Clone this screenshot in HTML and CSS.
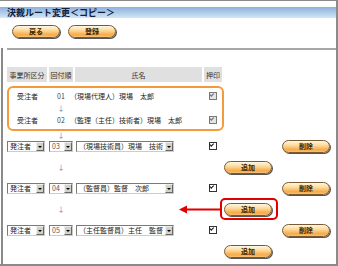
FILE: index.html
```
<!DOCTYPE html>
<html lang="ja">
<head>
    <meta charset="UTF-8">
    <title>決裁ルート変更</title>
    <link rel="stylesheet" href="styles.css">
</head>
<body>
<div class="frame">
    <div class="titlebar">決裁ルート変更＜コピー＞</div>
    <div class="toolbar">
        <span class="btn">戻る</span>
        <span class="btn">登録</span>
    </div>
    <div class="route">
        <div class="rule"></div>
        <div class="grid head">
            <div class="th">事業所区分</div>
            <div class="th">回付順</div>
            <div class="th">氏名</div>
            <div class="th">押印</div>
        </div>

        <!-- 固定ルート（編集不可） -->
        <div class="fixed">
            <div class="grid line">
                <div class="kind">受注者</div>
                <div class="no">01</div>
                <div class="name">（現場代理人）現場　太郎</div>
                <div><span class="chk off"></span></div>
            </div>
            <div class="grid step"><div></div><div class="arrow">↓</div></div>
            <div class="grid line">
                <div class="kind">受注者</div>
                <div class="no">02</div>
                <div class="name">（監理（主任）技術者）現場　太郎</div>
                <div><span class="chk off"></span></div>
            </div>
        </div>
        <div class="grid step"><div></div><div class="arrow">↓</div></div>

        <div class="grid line edit">
            <div class="sel s1"><span>発注者</span><i></i></div>
            <div class="sel s2"><span>03</span><i></i></div>
            <div class="sel s3"><span>（現場技術員）現場　技術</span><i></i></div>
            <div><span class="chk"></span></div>
            <div><span class="btn del">削除</span></div>
        </div>
        <div class="grid link">
            <div></div><div class="arrow">↓</div><div></div><div></div>
            <div><span class="btn">追加</span></div>
        </div>

        <div class="grid line edit">
            <div class="sel s1"><span>発注者</span><i></i></div>
            <div class="sel s2"><span>04</span><i></i></div>
            <div class="sel s3"><span>（監督員）監督　次郎</span><i></i></div>
            <div><span class="chk"></span></div>
            <div><span class="btn del">削除</span></div>
        </div>
        <div class="grid link">
            <div></div><div class="arrow">↓</div><div></div><div></div>
            <div><span class="mark"><span class="btn">追加</span></span></div>
            <svg class="pointer" width="42" height="9" viewBox="0 0 42 9">
                <line x1="6" y1="4.5" x2="41" y2="4.5" stroke="#e00000" stroke-width="2"/>
                <polygon points="0,4.5 8,0.5 8,8.5" fill="#e00000"/>
            </svg>
        </div>

        <div class="grid line edit">
            <div class="sel s1"><span>発注者</span><i></i></div>
            <div class="sel s2"><span>05</span><i></i></div>
            <div class="sel s3"><span>（主任監督員）主任　監督</span><i></i></div>
            <div><span class="chk"></span></div>
            <div><span class="btn del">削除</span></div>
        </div>
        <div class="grid link">
            <div></div><div></div><div></div><div></div>
            <div><span class="btn">追加</span></div>
        </div>
    </div>
</div>
</body>
</html>
```

FILE: styles.css
```
body {
    margin: 0;
    background-color: #fff;
    font-family: "Noto Sans CJK JP", "Noto Sans", sans-serif;
    color: #222;
}
.frame {
    width: 338px;
    height: 266px;
    box-sizing: border-box;
    border-top: 1px solid #8a8a8a;
    border-right: 2px solid #8a8a8a;
    border-bottom: 2px solid #8a8a8a;
    overflow: hidden;
}
.titlebar {
    margin-top: 6px;
    height: 11px;
    line-height: 11px;
    padding-left: 7px;
    background: linear-gradient(#8eb0dc, #b4d0ec 60%, #d4e8f6);
    font-size: 9px;
    font-weight: bold;
    color: #10203a;
}
.toolbar {
    display: flex;
    gap: 8px;
    padding-left: 12px;
    margin-top: 7px;
}
.btn {
    display: inline-flex;
    align-items: center;
    justify-content: center;
    width: 46px;
    height: 11px;
    border: 1px solid #7a5a30;
    border-radius: 7px;
    background: linear-gradient(#fff7e4, #fdd99a 40%, #f5aa48 80%, #f7c277);
    box-shadow: 1px 1px 0 #555;
    font-size: 7px;
    font-weight: bold;
    color: #3a2200;
    line-height: 1;
}
.route {
    margin-top: 10px;
    margin-left: 1px;
    border-left: 2px solid #8a8a8a;
    padding-left: 4px;
}
.rule {
    height: 2px;
    background-color: #a8a8a8;
    margin-bottom: 17px;
}
.grid {
    display: grid;
    grid-template-columns: 40px 24px 127px 18px 1fr;
    column-gap: 2px;
    align-items: center;
    font-size: 7px;
    position: relative;
}
.head {
    height: 15px;
    align-items: stretch;
}
.th {
    background-color: #e0e0e0;
    display: flex;
    align-items: center;
    justify-content: center;
    color: #333;
}
.fixed {
    width: 217px;
    box-sizing: border-box;
    margin-top: 4px;
    border: 2px solid #f39a3c;
    border-radius: 6px;
    padding-bottom: 1px;
}
.fixed .grid {
    grid-template-columns: 38px 24px 127px 18px;
}
.line {
    height: 16px;
}
.step {
    height: 8px;
}
.kind {
    padding-left: 8px;
}
.no {
    text-align: center;
    color: #444;
}
.name {
    margin-left: -5px;
    white-space: nowrap;
}
.arrow {
    text-align: center;
    font-size: 7px;
    line-height: 1;
    color: #6a86b8;
}
.chk {
    display: block;
    width: 6px;
    height: 6px;
    margin-left: 5px;
    border: 1px solid #333;
    background: #fff;
    position: relative;
}
.chk::after {
    content: "";
    position: absolute;
    left: 1px;
    top: 0;
    width: 3px;
    height: 2px;
    border-left: 1px solid #111;
    border-bottom: 1px solid #111;
    transform: rotate(-45deg);
    transform-origin: 1px 3px;
}
.chk.off {
    border-color: #7a7a7a;
    background: #e4e4e4;
}
.chk.off::after {
    border-color: #6a6a6a;
}
.edit {
    height: 14px;
}
.sel {
    display: flex;
    align-items: center;
    justify-content: space-between;
    height: 11px;
    box-sizing: border-box;
    border: 1px solid #7a7a7a;
    border-right-color: #ccc;
    border-bottom-color: #ccc;
    background: #fff;
    padding-left: 2px;
    white-space: nowrap;
    overflow: hidden;
}
.sel i {
    flex: none;
    width: 8px;
    height: 9px;
    box-sizing: border-box;
    background: #d4d0c8;
    border: 1px solid #eee;
    border-right-color: #666;
    border-bottom-color: #666;
    position: relative;
}
.sel i::after {
    content: "";
    position: absolute;
    left: 1px;
    top: 3px;
    border-left: 2px solid transparent;
    border-right: 2px solid transparent;
    border-top: 2px solid #000;
}
.s1 {
    width: 38px;
}
.s2 {
    width: 24px;
    color: #555;
}
.s3 {
    width: 98px;
    margin-left: 1px;
}
.del {
    margin-left: 58px;
}
.link {
    height: 28px;
}
.mark {
    display: inline-block;
    margin-left: -4px;
    padding: 3px 4px 2px 2px;
    border: 2px solid #e00000;
    border-radius: 5px;
}
.pointer {
    position: absolute;
    left: 172px;
    top: 10px;
}
```
